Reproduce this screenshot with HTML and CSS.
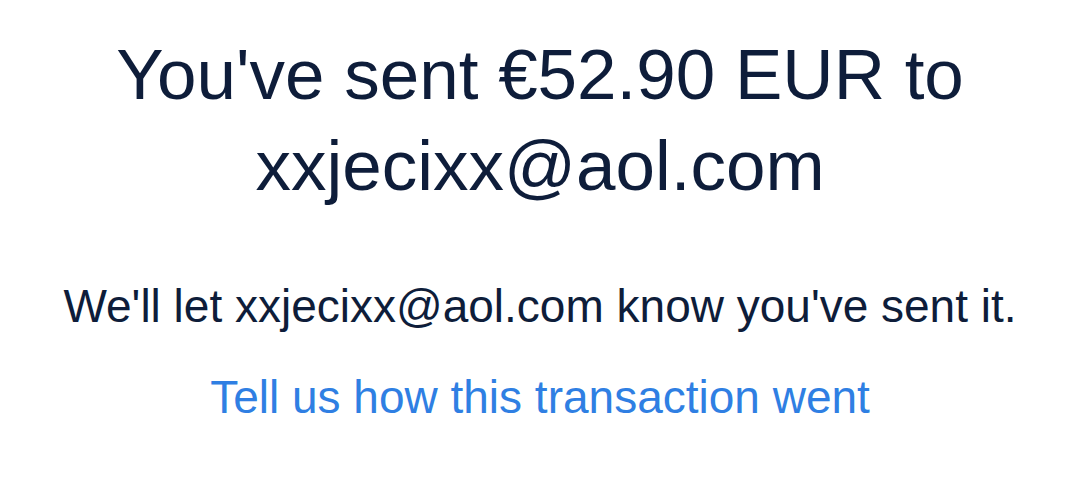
FILE: index.html
```html
<!DOCTYPE html>
<html lang="en">
<head>
<meta charset="utf-8">
<title>Payment sent</title>
<link rel="stylesheet" href="styles.css">
</head>
<body>
<main class="confirm">
  <h1 class="confirm-title">You've sent €52.90 EUR to<br>xxjecixx@aol.com</h1>
  <p class="confirm-note">We'll let xxjecixx@aol.com know you've sent it.</p>
  <a class="confirm-link" href="#">Tell us how this transaction went</a>
</main>
</body>
</html>
```
FILE: styles.css
```css
html, body {
  margin: 0;
  padding: 0;
  background: #ffffff;
}
body {
  font-family: "Liberation Sans", Arial, sans-serif;
  color: #0e1d3a;
}
.confirm {
  display: flex;
  flex-direction: column;
  align-items: center;
  text-align: center;
  padding-top: 29px;
}
.confirm-title {
  margin: 0;
  font-size: 71px;
  font-weight: 400;
  line-height: 91px;
}
.confirm-note {
  margin: 65px 0 0;
  font-size: 46px;
  line-height: 60px;
}
.confirm-link {
  margin-top: 31px;
  font-size: 46px;
  line-height: 60px;
  color: #2f7fe3;
  text-decoration: none;
}
```
